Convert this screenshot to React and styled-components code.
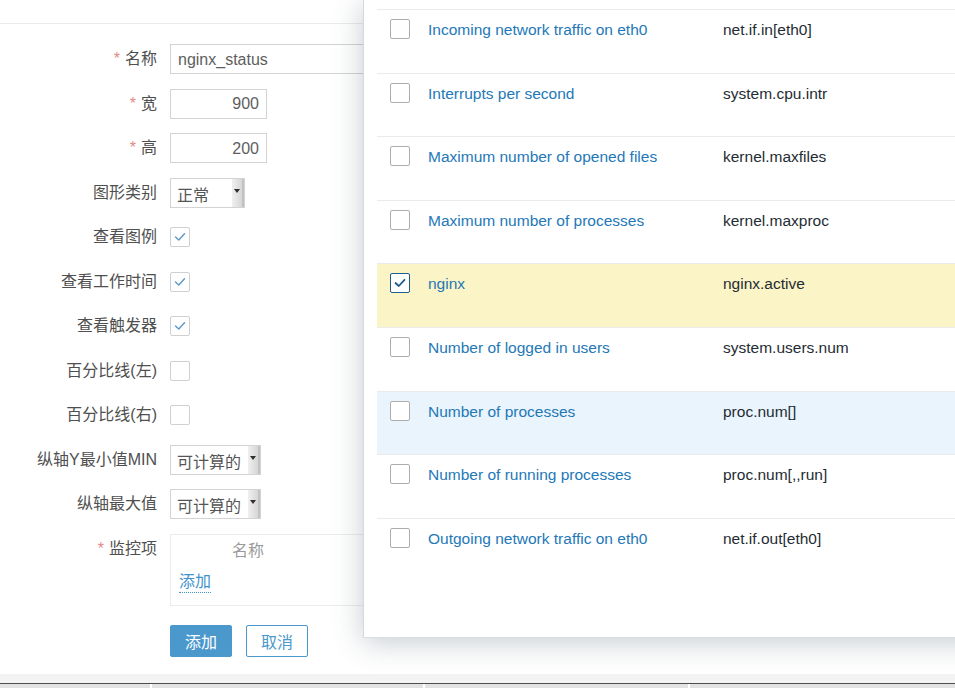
import React from "react";
import styled, { createGlobalStyle, css } from "styled-components";

const GlobalStyle = createGlobalStyle`
  html, body {
    margin: 0;
    padding: 0;
    background: #ffffff;
    overflow: hidden;
  }
  body {
    font-family: "Liberation Sans", "Noto Sans CJK SC", Arial, sans-serif;
  }
  * {
    box-sizing: border-box;
  }
`;

const Page = styled.div`
  position: relative;
  width: 955px;
  height: 688px;
  overflow: hidden;
  display: flex;
  flex-direction: column;
  background: #ffffff;
`;

const TopBar = styled.div`
  height: 24px;
  flex-shrink: 0;
  border-bottom: 1px solid #ebebeb;
`;

const Form = styled.div`
  display: flex;
  flex-direction: column;
  gap: 14.5px;
  padding-top: 20px;
`;

const Row = styled.div`
  display: grid;
  grid-template-columns: 157px 1fr;
  column-gap: 13px;
  align-items: ${(p) => (p.$top ? "start" : "center")};
`;

const Label = styled.label`
  text-align: right;
  font-size: 16px;
  line-height: 30px;
  color: #4f4f4f;
  white-space: nowrap;
`;

const Star = styled.span`
  color: #e28b84;
  margin-right: 5px;
`;

const TextInput = styled.input`
  width: ${(p) => p.$width}px;
  height: 30px;
  border: 1px solid #d3d3d3;
  border-radius: 0;
  padding: 1px 7px 0 7px;
  font-family: "Liberation Sans", Arial, sans-serif;
  font-size: 16px;
  color: #5e5e5e;
  text-align: ${(p) => p.$align || "left"};
  outline: none;
  background: #ffffff;
`;

const Select = styled.div`
  width: ${(p) => p.$width}px;
  height: 30px;
  border: 1px solid #d3d3d3;
  display: flex;
  align-items: stretch;
  justify-content: space-between;
  background: #ffffff;
`;

const SelectText = styled.span`
  padding: 7px 0 0 6px;
  font-size: 16px;
  line-height: 20px;
  color: #555555;
  white-space: nowrap;
`;

const SelectArrow = styled.span`
  position: relative;
  width: 12px;
  background: linear-gradient(to right, #f0f0f0, #d6d6d6);
  border-right: 2px solid #c2c2c2;
  &::after {
    content: "";
    position: absolute;
    left: 2px;
    top: 10px;
    border-left: 3.5px solid transparent;
    border-right: 3.5px solid transparent;
    border-top: 4px solid #2f2f2f;
  }
`;

const Check = styled.span`
  width: 20px;
  height: 20px;
  border: 1px solid ${(p) => p.$border || "#d0d0d0"};
  border-radius: 2px;
  background: #ffffff;
  display: inline-flex;
  align-items: center;
  justify-content: center;
  svg {
    display: block;
  }
`;

const CheckCell = styled.div`
  height: 30px;
  display: flex;
  align-items: center;
`;

const ItemsBox = styled.div`
  width: 453px;
  height: 72px;
  border: 1px solid #ececec;
  padding: 6px 8px 0 8px;
  display: flex;
  flex-direction: column;
`;

const ItemsHeader = styled.div`
  font-size: 16px;
  line-height: 20px;
  color: #9a9a9a;
  padding-left: 53px;
`;

const AddLink = styled.span`
  align-self: flex-start;
  margin-top: 11px;
  font-size: 16px;
  line-height: 20px;
  color: #3f92cc;
  border-bottom: 1px dotted #3f92cc;
`;

const Buttons = styled.div`
  display: flex;
  gap: 14px;
  padding-left: 170px;
  margin-top: 5px;
`;

const Button = styled.button`
  height: 32px;
  padding: 0 14px;
  border-radius: 2px;
  font-family: "Liberation Sans", "Noto Sans CJK SC", sans-serif;
  font-size: 16px;
  cursor: pointer;
  ${(p) =>
    p.$primary
      ? css`
          background: #4a98cc;
          border: 1px solid #4a98cc;
          color: #ffffff;
        `
      : css`
          background: #ffffff;
          border: 1px solid #4a98cc;
          color: #4a98cc;
        `}
`;

const Spacer = styled.div`
  flex: 1;
`;

const BottomBand = styled.div`
  height: 9px;
  background: #f3f3f3;
  flex-shrink: 0;
`;

const Taskbar = styled.div`
  height: 5px;
  flex-shrink: 0;
  border-top: 1px solid #4e4e4e;
  background: #e2e2e2;
  display: flex;
`;

const TaskTab = styled.div`
  width: ${(p) => p.$width}px;
  border-right: 2px solid #ffffff;
`;

const Modal = styled.div`
  position: absolute;
  left: 363px;
  top: 0;
  width: 640px;
  height: 638px;
  background: #ffffff;
  border-left: 1px solid #d4d9de;
  border-bottom: 1px solid #d9dee2;
  box-shadow: 0 4px 28px rgba(60, 80, 100, 0.3);
  padding: 9px 0 0 13px;
`;

const ItemRow = styled.div`
  display: grid;
  grid-template-columns: 38px 295px 1fr;
  height: 63.6px;
  border-top: 1px solid #ebebeb;
  padding: 9px 0 0 13px;
  background: ${(p) =>
    p.$tone === "selected" ? "#fbf4c6" : p.$tone === "hover" ? "#eaf4fc" : "#ffffff"};
`;

const ItemName = styled.span`
  font-size: 15.5px;
  line-height: 22px;
  color: #2378b8;
`;

const ItemKey = styled.span`
  font-size: 15.5px;
  line-height: 22px;
  color: #1f2c33;
`;

const CheckMark = ({ color, width = 1.6 }) => (
  <svg width="14" height="14" viewBox="0 0 14 14">
    <polyline
      points="2.5,7 5.8,10 11.5,3.8"
      fill="none"
      stroke={color}
      strokeWidth={width}
      strokeLinecap="round"
      strokeLinejoin="round"
    />
  </svg>
);

const items = [
  { name: "Incoming network traffic on eth0", key: "net.if.in[eth0]" },
  { name: "Interrupts per second", key: "system.cpu.intr" },
  { name: "Maximum number of opened files", key: "kernel.maxfiles" },
  { name: "Maximum number of processes", key: "kernel.maxproc" },
  { name: "nginx", key: "nginx.active", checked: true, tone: "selected" },
  { name: "Number of logged in users", key: "system.users.num" },
  { name: "Number of processes", key: "proc.num[]", tone: "hover" },
  { name: "Number of running processes", key: "proc.num[,,run]" },
  { name: "Outgoing network traffic on eth0", key: "net.if.out[eth0]" },
];

const checkRows = [
  { label: "查看图例", checked: true },
  { label: "查看工作时间", checked: true },
  { label: "查看触发器", checked: true },
  { label: "百分比线(左)", checked: false },
  { label: "百分比线(右)", checked: false },
];

export default function App() {
  return (
    <Page>
      <GlobalStyle />
      <TopBar />
      <Form>
        <Row>
          <Label>
            <Star>*</Star>名称
          </Label>
          <TextInput $width={453} defaultValue="nginx_status" readOnly />
        </Row>
        <Row>
          <Label>
            <Star>*</Star>宽
          </Label>
          <TextInput $width={97} $align="right" defaultValue="900" readOnly />
        </Row>
        <Row>
          <Label>
            <Star>*</Star>高
          </Label>
          <TextInput $width={97} $align="right" defaultValue="200" readOnly />
        </Row>
        <Row>
          <Label>图形类别</Label>
          <Select $width={75}>
            <SelectText>正常</SelectText>
            <SelectArrow />
          </Select>
        </Row>
        {checkRows.map((r) => (
          <Row key={r.label}>
            <Label>{r.label}</Label>
            <CheckCell>
              <Check>{r.checked && <CheckMark color="#5b98c7" width={1.4} />}</Check>
            </CheckCell>
          </Row>
        ))}
        <Row>
          <Label>纵轴Y最小值MIN</Label>
          <Select $width={91}>
            <SelectText>可计算的</SelectText>
            <SelectArrow />
          </Select>
        </Row>
        <Row>
          <Label>纵轴最大值</Label>
          <Select $width={91}>
            <SelectText>可计算的</SelectText>
            <SelectArrow />
          </Select>
        </Row>
        <Row $top>
          <Label>
            <Star>*</Star>监控项
          </Label>
          <ItemsBox>
            <ItemsHeader>名称</ItemsHeader>
            <AddLink>添加</AddLink>
          </ItemsBox>
        </Row>
        <Buttons>
          <Button $primary>添加</Button>
          <Button>取消</Button>
        </Buttons>
      </Form>
      <Spacer />
      <BottomBand />
      <Taskbar>
        <TaskTab $width={152} />
        <TaskTab $width={273} />
        <TaskTab $width={265} />
      </Taskbar>

      <Modal>
        {items.map((it) => (
          <ItemRow key={it.name} $tone={it.tone}>
            <div>
              <Check $border={it.checked ? "#1e5c8e" : "#adadad"}>
                {it.checked && <CheckMark color="#1e5c8e" width={1.8} />}
              </Check>
            </div>
            <ItemName>{it.name}</ItemName>
            <ItemKey>{it.key}</ItemKey>
          </ItemRow>
        ))}
      </Modal>
    </Page>
  );
}
